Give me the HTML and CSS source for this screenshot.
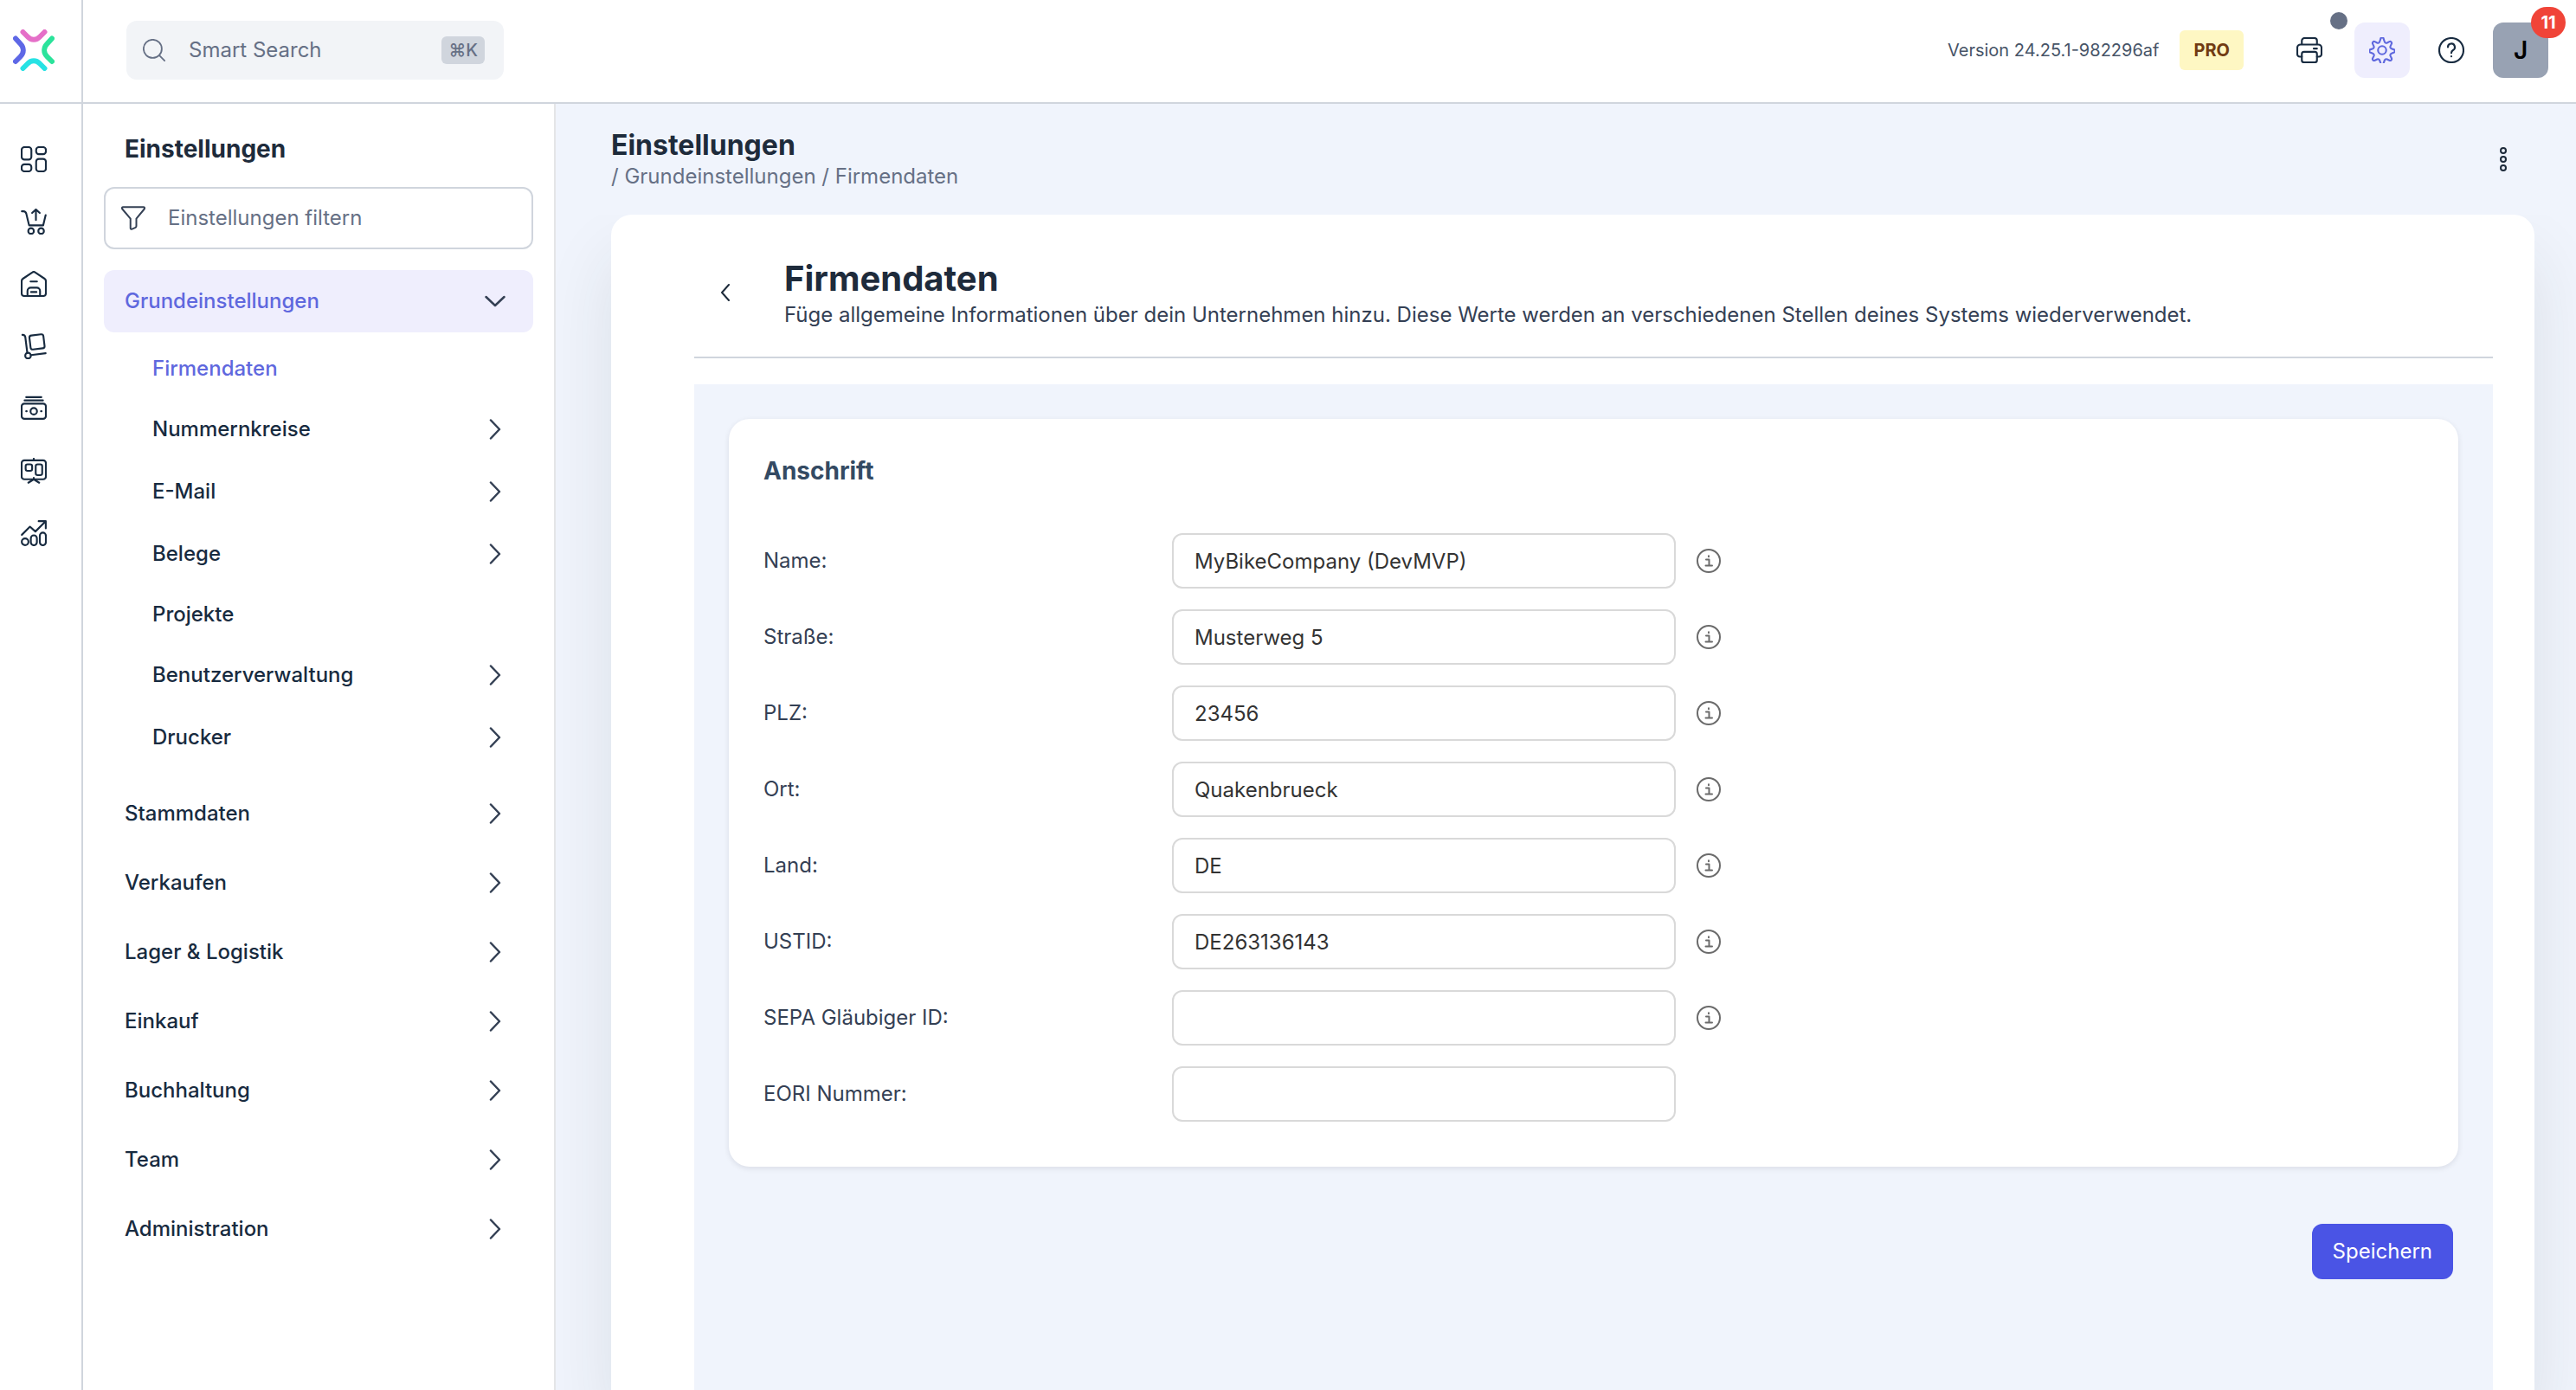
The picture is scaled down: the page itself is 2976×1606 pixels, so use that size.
FILE: index.html
```
<!DOCTYPE html>
<html lang="de">
<head>
    <meta charset="UTF-8">
    <meta name="viewport" content="width=device-width, initial-scale=1.0">
    <title>Einstellungen - Firmendaten</title>
    <link rel="stylesheet" href="styles.css">
</head>
<body>
    <!-- Icons -->
    <svg class="sprite" aria-hidden="true">
        <symbol id="chevron-right" viewBox="0 0 24 24"><path d="M7 1.5 17 12 7 22.5"/></symbol>
        <symbol id="info" viewBox="0 0 28 28"><circle cx="14" cy="14" r="13"/><path d="M11 12.500h3.500V19.500M10.500 19.500h7.500"/><path d="M14 8.200v1"/></symbol>
    </svg>

    <header class="topbar">
        <a class="logo" href="#" aria-label="Startseite">
            <svg viewBox="0 0 48 48">
                <path d="M11.500 3 17 8.500C21 12.900 27 12.900 31 8.500L36.500 3" stroke="#e56fc8"/>
                <path d="M3 10.500 8.500 16.500C12.900 21 12.900 27 8.500 31.500L3 37" stroke="#5e68e6"/>
                <path d="M45 10.500 39.500 16.500C35.100 21 35.100 27 39.500 31.500L45 37" stroke="#2be39b"/>
                <path d="M11.500 45 17 39.500C21 35.100 27 35.100 31 39.500L36.500 45" stroke="#27e2e4"/>
            </svg>
        </a>
        <div class="topbar-main">
            <label class="search">
                <svg class="icon icon-search" viewBox="0 0 24 24"><circle cx="10.500" cy="10.500" r="9.700"/><path d="m17.500 17.500 5.700 5.700"/></svg>
                <input type="text" placeholder="Smart Search" aria-label="Smart Search">
                <kbd>⌘K</kbd>
            </label>
            <span class="version">Version 24.25.1-982296af</span>
            <span class="plan">PRO</span>
            <div class="actions">
                <button class="action action-print" type="button" aria-label="Drucker">
                    <svg class="icon" viewBox="0 0 24 24"><path d="M5 18H3.200A2.500 2.500 0 0 1 .8 15.500V9.800a3 3 0 0 1 3-3h16.400a3 3 0 0 1 3 3v5.700A2.500 2.500 0 0 1 20.800 18H19M5 6.800V3.200A2.400 2.400 0 0 1 7.400.8h9.200A2.400 2.400 0 0 1 19 3.200v3.600M16 10.500h3"/><rect x="5" y="13.500" width="14" height="9.700" rx="2"/></svg>
                    <span class="dot"></span>
                </button>
                <button class="action action-active" type="button" aria-label="Einstellungen">
                    <svg class="icon" viewBox="0 0 24 24"><circle cx="12" cy="12" r="3.800"/><path d="m10.500 1.900-.8 2.300a1.700 1.700 0 0 1-2.300 1L5.300 4.100a1.500 1.500 0 0 0-2 2l1 2.200a1.700 1.700 0 0 1-.9 2.300l-2.100.7a1.500 1.500 0 0 0 0 2.900l2.100.8a1.700 1.700 0 0 1 1 2.300l-1.100 2.100a1.500 1.500 0 0 0 2 2l2.100-1a1.700 1.700 0 0 1 2.300 1l.8 2.100a1.500 1.500 0 0 0 3 0l.8-2.100a1.700 1.700 0 0 1 2.300-1l2.100 1a1.500 1.500 0 0 0 2-2l-1-2.100a1.700 1.700 0 0 1 1-2.300l2-.8a1.500 1.500 0 0 0 0-2.900l-2-.7a1.700 1.700 0 0 1-1-2.300l1-2.200a1.500 1.500 0 0 0-2-2l-2.100 1.100a1.700 1.700 0 0 1-2.300-1l-.8-2.300a1.500 1.500 0 0 0-3 0Z"/></svg>
                </button>
                <button class="action" type="button" aria-label="Hilfe">
                    <svg class="icon" viewBox="0 0 24 24"><circle cx="12" cy="12" r="11.200"/><path d="M8.800 9.200a3.200 3.200 0 1 1 4.700 2.800c-1 .6-1.500 1.200-1.500 2.500M12 17.600v.1"/></svg>
                </button>
                <button class="action avatar" type="button">J<span class="badge">11</span></button>
            </div>
        </div>
    </header>

    <div class="layout">
        <nav class="rail" aria-label="Hauptmenü">
            <a href="#" aria-label="Dashboard"><svg class="icon" viewBox="0 0 24 24"><rect x=".8" y=".8" width="9" height="11.500" rx="2.500"/><rect x="14.200" y=".8" width="9" height="6.500" rx="2.500"/><rect x=".8" y="16.700" width="9" height="6.500" rx="2.500"/><rect x="14.200" y="11.700" width="9" height="11.500" rx="2.500"/></svg></a>
            <a href="#" aria-label="Verkaufen"><svg class="icon" viewBox="0 0 24 24"><path d="M1 2.500h1.500c1.500 0 2.200.7 2.600 2.200l2.600 10.800h13L23 6M14 10.500V1M10.500 4 14 .8 17.500 4"/><circle cx="9.500" cy="20.700" r="2.600"/><circle cx="18.800" cy="20.700" r="2.600"/></svg></a>
            <a href="#" aria-label="Lager"><svg class="icon" viewBox="0 0 24 24"><path d="M.8 9.500C.8 8.300 1.200 7.700 2 7.200L10.800 1.300a2 2 0 0 1 2.400 0L22 7.200c.8.500 1.200 1.100 1.200 2.300v11.300a2.400 2.400 0 0 1-2.400 2.400H3.200A2.400 2.400 0 0 1 .8 20.800ZM9 9.800h6M6.200 23v-4.500a3 3 0 0 1 3-3h5.600a3 3 0 0 1 3 3V23M9.500 19.500h5"/></svg></a>
            <a href="#" aria-label="Einkauf"><svg class="icon" viewBox="0 0 24 24"><path d="M1.500 1.500C3.200 1.300 3.900 2 4.200 3.600L6 18M9.500 20.200 23 18.500"/><rect x="8.500" y="1.500" width="13" height="13" rx="2" transform="rotate(-7 15 8)"/><circle cx="6.700" cy="20.700" r="2.600"/></svg></a>
            <a href="#" aria-label="Buchhaltung"><svg class="icon" viewBox="0 0 24 24"><rect x=".8" y="7.500" width="22.400" height="14" rx="2.500"/><path d="M5 1.500h14M3.500 4.500h17M5 14.500h.5M18.700 14.500h.5"/><circle cx="12" cy="14.500" r="3"/></svg></a>
            <a href="#" aria-label="Kasse"><svg class="icon" viewBox="0 0 24 24"><rect x=".8" y="2.300" width="22.400" height="17.500" rx="2.500"/><rect x="4.500" y="6" width="6" height="6" rx="1.800"/><rect x="13.800" y="6" width="6" height="10" rx="1.800"/><path d="M12 .8v1.500M12 18.500V20M7 23l5-3.200 5 3.200"/></svg></a>
            <a href="#" aria-label="Statistik"><svg class="icon" viewBox="0 0 24 24"><path d="m1 13.500 7.500-7.500 5 4.500L23 1M16.500.9h6.600v6.600"/><circle cx="4" cy="20" r="3.100"/><rect x="9.300" y="14" width="5.600" height="9.200" rx="2.800"/><rect x="17.600" y="11.500" width="5.600" height="11.700" rx="2.800"/></svg></a>
        </nav>

        <aside class="sidebar">
            <h2>Einstellungen</h2>
            <label class="filter">
                <svg class="icon icon-filter" viewBox="0 0 24 24"><path d="M2 1h20c1.200 0 1.500 1 .9 2L15 12.500V20c0 .8-.4 1.200-1.200 1.500l-3 1.300c-.9.400-1.600-.1-1.600-1V12.500L1.100 3C.5 2 .8 1 2 1Z"/></svg>
                <input type="text" placeholder="Einstellungen filtern" aria-label="Einstellungen filtern">
            </label>
            <ul class="menu">
                <li>
                    <a class="item open" href="#">Grundeinstellungen <svg class="chevron"><use href="#chevron-right"/></svg></a>
                    <ul class="submenu">
                        <li><a class="item plain current" href="#">Firmendaten</a></li>
                        <li><a class="item" href="#">Nummernkreise <svg class="chevron"><use href="#chevron-right"/></svg></a></li>
                        <li><a class="item" href="#">E-Mail <svg class="chevron"><use href="#chevron-right"/></svg></a></li>
                        <li><a class="item" href="#">Belege <svg class="chevron"><use href="#chevron-right"/></svg></a></li>
                        <li><a class="item plain" href="#">Projekte</a></li>
                        <li><a class="item" href="#">Benutzerverwaltung <svg class="chevron"><use href="#chevron-right"/></svg></a></li>
                        <li><a class="item" href="#">Drucker <svg class="chevron"><use href="#chevron-right"/></svg></a></li>
                    </ul>
                </li>
                <li><a class="item" href="#">Stammdaten <svg class="chevron"><use href="#chevron-right"/></svg></a></li>
                <li><a class="item" href="#">Verkaufen <svg class="chevron"><use href="#chevron-right"/></svg></a></li>
                <li><a class="item" href="#">Lager &amp; Logistik <svg class="chevron"><use href="#chevron-right"/></svg></a></li>
                <li><a class="item" href="#">Einkauf <svg class="chevron"><use href="#chevron-right"/></svg></a></li>
                <li><a class="item" href="#">Buchhaltung <svg class="chevron"><use href="#chevron-right"/></svg></a></li>
                <li><a class="item" href="#">Team <svg class="chevron"><use href="#chevron-right"/></svg></a></li>
                <li><a class="item" href="#">Administration <svg class="chevron"><use href="#chevron-right"/></svg></a></li>
            </ul>
        </aside>

        <main class="content">
            <div class="page-head">
                <div>
                    <h1>Einstellungen</h1>
                    <p class="breadcrumb">/ <a href="#">Grundeinstellungen</a> / <a href="#">Firmendaten</a></p>
                </div>
                <button class="more" type="button" aria-label="Mehr">
                    <svg viewBox="0 0 10 30"><circle cx="5" cy="5" r="3"/><circle cx="5" cy="15" r="3"/><circle cx="5" cy="25" r="3"/></svg>
                </button>
            </div>

            <section class="sheet">
                <div class="sheet-head">
                    <a class="back" href="#" aria-label="Zurück"><svg viewBox="0 0 12 20"><path d="M10 1 2 10l8 9"/></svg></a>
                    <div>
                        <h2>Firmendaten</h2>
                        <p>Füge allgemeine Informationen über dein Unternehmen hinzu. Diese Werte werden an verschiedenen Stellen deines Systems wiederverwendet.</p>
                    </div>
                </div>

                <form class="panel">
                    <div class="card">
                        <h3>Anschrift</h3>
                        <div class="row">
                            <label for="name">Name:</label>
                            <input type="text" id="name" value="MyBikeCompany (DevMVP)">
                            <svg class="info"><use href="#info"/></svg>
                        </div>
                        <div class="row">
                            <label for="strasse">Straße:</label>
                            <input type="text" id="strasse" value="Musterweg 5">
                            <svg class="info"><use href="#info"/></svg>
                        </div>
                        <div class="row">
                            <label for="plz">PLZ:</label>
                            <input type="text" id="plz" value="23456">
                            <svg class="info"><use href="#info"/></svg>
                        </div>
                        <div class="row">
                            <label for="ort">Ort:</label>
                            <input type="text" id="ort" value="Quakenbrueck">
                            <svg class="info"><use href="#info"/></svg>
                        </div>
                        <div class="row">
                            <label for="land">Land:</label>
                            <input type="text" id="land" value="DE">
                            <svg class="info"><use href="#info"/></svg>
                        </div>
                        <div class="row">
                            <label for="ustid">USTID:</label>
                            <input type="text" id="ustid" value="DE263136143">
                            <svg class="info"><use href="#info"/></svg>
                        </div>
                        <div class="row">
                            <label for="sepa">SEPA Gläubiger ID:</label>
                            <input type="text" id="sepa">
                            <svg class="info"><use href="#info"/></svg>
                        </div>
                        <div class="row">
                            <label for="eori">EORI Nummer:</label>
                            <input type="text" id="eori">
                        </div>
                    </div>
                    <button class="save" type="button">Speichern</button>
                </form>
            </section>
        </main>
    </div>
</body>
</html>
```
FILE: styles.css
```
* {
    margin: 0;
    padding: 0;
    box-sizing: border-box;
}

body {
    display: flex;
    flex-direction: column;
    height: 100vh;
    overflow: hidden;
    font-family: Inter, "Liberation Sans", sans-serif;
    font-size: 24px;
    line-height: 32px;
    color: #1e2b3b;
    background: #fff;
}

a {
    color: inherit;
    text-decoration: none;
}

ul {
    list-style: none;
}

input,
button {
    font: inherit;
    color: inherit;
    border: none;
    background: none;
}

input {
    min-width: 0;
    outline: none;
}

input::placeholder {
    color: #667085;
    opacity: 1;
}

button {
    cursor: pointer;
}

svg {
    flex-shrink: 0;
    fill: none;
    stroke: currentColor;
    stroke-linecap: round;
    stroke-linejoin: round;
}

.sprite {
    display: none;
}

.icon {
    width: 30px;
    height: 30px;
    stroke-width: 1.7;
}

.icon-search {
    width: 26px;
    height: 26px;
}

.icon-filter {
    width: 28px;
    height: 28px;
}

/* Kopfzeile */
.topbar {
    display: flex;
    flex-shrink: 0;
    height: 120px;
    border-bottom: 2px solid #d0d5dd;
}

.logo {
    display: flex;
    align-items: center;
    width: 96px;
    padding: 0 0 2px 15px;
    border-right: 2px solid #d0d5dd;
}

.logo svg {
    width: 48px;
    height: 48px;
    stroke-width: 6;
}

.topbar-main {
    display: flex;
    flex: 1;
    align-items: center;
    padding: 0 32px 2px 50px;
}

.search {
    display: flex;
    align-items: center;
    width: 436px;
    height: 68px;
    margin-right: auto;
    padding: 0 22px 0 19px;
    border-radius: 12px;
    background: #f2f4f7;
    color: #667085;
}

.search input {
    flex: 1;
    padding-left: 27px;
}

kbd {
    padding: 0 8px;
    border-radius: 6px;
    font-family: inherit;
    font-size: 20px;
    font-weight: 500;
    background: #d0d5dd;
}

.version {
    font-size: 20px;
    color: #475467;
}

.plan {
    margin: 0 44px 0 24px;
    padding: 7px 16px;
    border-radius: 6px;
    font-size: 20px;
    font-weight: 700;
    color: #713b12;
    background: #fef7c3;
}

.actions {
    display: flex;
    gap: 16px;
    color: #182b40;
}

.action {
    position: relative;
    display: flex;
    align-items: center;
    justify-content: center;
    width: 64px;
    height: 64px;
    border-radius: 12px;
}

.action-print {
    margin-right: 4px;
}

.dot {
    position: absolute;
    top: -12px;
    right: -12px;
    width: 20px;
    height: 20px;
    border-radius: 50%;
    background: #667085;
}

.action-active {
    color: #5f68de;
    background: #efeefd;
}

.avatar {
    font-size: 28px;
    font-weight: 600;
    color: #000;
    background: #98a2b3;
}

.badge {
    position: absolute;
    top: -18px;
    right: -20px;
    width: 40px;
    height: 36px;
    border-radius: 18px;
    font-size: 20px;
    line-height: 36px;
    font-weight: 700;
    color: #fff;
    background: #f04438;
}

.layout {
    display: flex;
    flex: 1;
    min-height: 0;
}

.rail {
    display: flex;
    flex-direction: column;
    gap: 42px;
    width: 96px;
    padding: 49px 0 0 24px;
    border-right: 2px solid #d0d5dd;
    color: #182b40;
}

.rail a {
    height: 30px;
    line-height: 0;
}

/* Seitenmenü */
.sidebar {
    width: 546px;
    padding: 32px 24px;
    border-right: 2px solid #e4e5e7;
}

.sidebar h2 {
    margin-bottom: 24px;
    padding-left: 24px;
    font-size: 28px;
    line-height: 40px;
    font-weight: 700;
}

.filter {
    display: flex;
    align-items: center;
    height: 72px;
    padding: 0 18px;
    border: 2px solid #d0d5dd;
    border-radius: 12px;
    color: #344054;
}

.filter input {
    flex: 1;
    padding-left: 26px;
}

.menu {
    display: flex;
    flex-direction: column;
    gap: 8px;
    margin-top: 24px;
}

.submenu {
    padding: 8px 0 8px 32px;
}

.item {
    display: flex;
    align-items: center;
    justify-content: space-between;
    height: 72px;
    padding: 0 32px 0 24px;
    border-radius: 12px;
    font-weight: 500;
    color: #182b40;
}

.item.plain {
    height: 68px;
}

.item.open {
    color: #5f68de;
    background: #efeefd;
}

.item.current {
    color: #5f68de;
}

.chevron {
    width: 24px;
    height: 24px;
    stroke-width: 2.5;
    color: #344054;
}

.open .chevron {
    transform: rotate(90deg);
}

/* Inhalt */
.content {
    display: flex;
    flex: 1;
    flex-direction: column;
    min-width: 0;
    padding: 0 48px 0 64px;
    background: #f0f4fc;
    overflow: hidden;
}

.page-head {
    z-index: 1;
    display: flex;
    align-items: center;
    justify-content: space-between;
    height: 128px;
    margin: 0 -48px 0 -64px;
    padding: 0 79px 0 64px;
    background: #f0f4fc;
}

.page-head h1 {
    font-size: 32px;
    line-height: 40px;
    font-weight: 700;
}

.breadcrumb {
    color: #667085;
}

.more svg {
    display: block;
    width: 10px;
    height: 30px;
    stroke-width: 2;
}

.sheet {
    display: flex;
    flex: 1;
    flex-direction: column;
    padding: 0 48px 0 96px;
    border-radius: 24px 24px 0 0;
    background: #fff;
    box-shadow: 0 48px 80px rgba(40, 50, 50, 0.1);
}

.sheet-head {
    display: flex;
    align-items: center;
    gap: 62px;
    padding: 48px 0 32px 30px;
    border-bottom: 2px solid #d0d5dd;
}

.back svg {
    display: block;
    width: 12px;
    height: 20px;
    stroke-width: 2;
}

.sheet-head h2 {
    font-size: 40px;
    line-height: 52px;
    font-weight: 700;
}

.sheet-head p {
    color: #344054;
}

.panel {
    display: flex;
    flex: 1;
    flex-direction: column;
    margin-top: 30px;
    padding: 40px;
    background: #f0f4fc;
}

.card {
    display: flex;
    flex-direction: column;
    gap: 24px;
    padding: 40px 40px 52px;
    border-radius: 24px;
    background: #fff;
    box-shadow: 0 2px 6px rgba(16, 24, 40, 0.1);
}

.card h3 {
    margin-bottom: 28px;
    font-size: 28px;
    line-height: 40px;
    font-weight: 700;
    color: #344a63;
}

.row {
    display: flex;
    align-items: center;
}

.row label {
    width: 472px;
    color: #344054;
}

.row input {
    width: 582px;
    height: 64px;
    margin-right: 24px;
    padding: 0 24px;
    border: 2px solid #d9d9d9;
    border-radius: 12px;
    color: #333;
}

.info {
    width: 28px;
    height: 28px;
    stroke-width: 2;
    color: #6b6b6b;
}

.save {
    align-self: flex-end;
    margin: 66px 6px 0 0;
    padding: 16px 24px;
    border-radius: 12px;
    color: #fff;
    background: #4a54e5;
}
```
